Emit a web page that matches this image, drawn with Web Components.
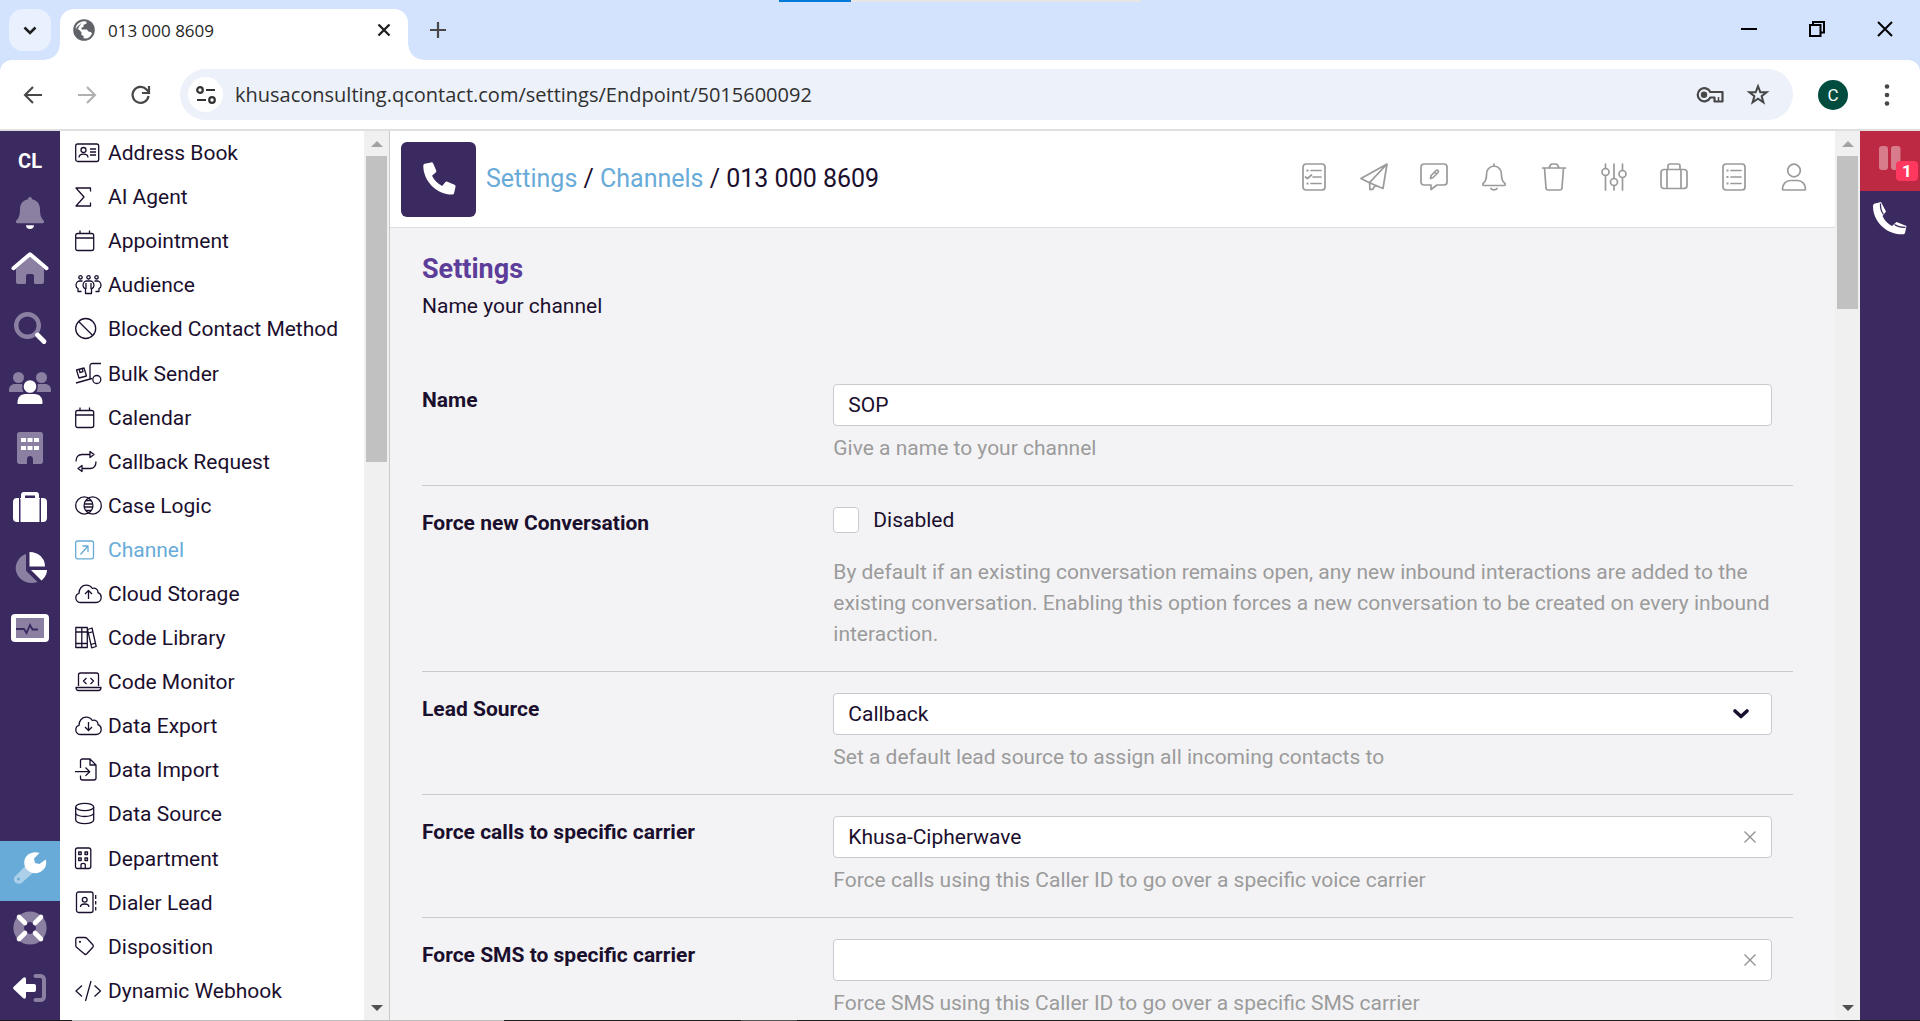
<!DOCTYPE html>
<html lang="en">
<head>
<meta charset="utf-8">
<title>013 000 8609</title>
<style>
  html, body { margin: 0; height: 100%; }
  body {
    --plum: #3b2a60;
    --ink: #1b0f2e;
    --sky: #68abd8;
    --muted: #9b9b9b;
    --line: #c9cacf;
    font-family: Roboto, "Liberation Sans", sans-serif;
    font-size: 21px;
    color: var(--ink);
    overflow: hidden;
  }
</style>
</head>
<body>
<browser-window>
  <settings-app></settings-app>
</browser-window>

<script>
/* ---------- icon set: [width, height, markup] ---------- */
const ICONS = {
  /* browser */
  chevron: [18, 18, '<path d="M3.5 6.5 9 12l5.500-5.500" fill="none" stroke="currentColor" stroke-width="2.600"/>'],
  globe: [22, 22, '<circle cx="11" cy="11" r="10.800" fill="#5f6368"/><path d="M9.500 2.600c1.800-.6 3-.4 4.200.1l-.4 2.100-2.600.9-.3 2.200-2 .9.200 1.700 5.300.1 1.500 1.900 2.300.4 1.300 1.400c-.6 2-2.300 4.200-5 5.100l-3.600-.1.300-2.300-2.200-1.100-.1-2.800L2.600 9.200c.6-3.200 3.300-5.900 6.900-6.600z" fill="#fff"/><path d="M9 3.500 6.500 7 5 10l3 2.500-2.500-.5L3 9z" fill="#5f6368"/>'],
  cross: [14, 14, '<path d="M1.500 1.500 12.500 12.500M12.500 1.500 1.500 12.500" stroke="currentColor" stroke-width="2.300" fill="none"/>'],
  plus: [18, 18, '<path d="M9 1v16M1 9h16" stroke="#474747" stroke-width="2.200"/>'],
  minimise: [16, 16, '<path d="M0 8h16" stroke="#000" stroke-width="2"/>'],
  restore: [16, 16, '<path d="M1 4h10.500v11H1zM4 4V1h11v10.500h-3" fill="none" stroke="#000" stroke-width="2"/>'],
  closewin: [16, 16, '<path d="M1 1l14 14M15 1 1 15" stroke="#000" stroke-width="2"/>'],
  back: [20, 20, '<path d="M10 2 2 10l8 8M2 10h17" fill="none" stroke="currentColor" stroke-width="2.100"/>'],
  forward: [20, 20, '<path d="M10 2l8 8-8 8M18 10H1" fill="none" stroke="currentColor" stroke-width="2.100"/>'],
  reload: [20, 20, '<path d="M17.500 11a8 8 0 1 1-2-6.500L18 7" fill="none" stroke="currentColor" stroke-width="2.200"/><path d="M18 1v7h-7" fill="none" stroke="currentColor" stroke-width="2.200"/>'],
  tune: [20, 18, '<g fill="none" stroke="#333" stroke-width="2.200"><circle cx="4" cy="4" r="2.800"/><path d="M10 4h9M1 14h9"/><circle cx="16" cy="14" r="2.800"/></g>'],
  key: [28, 16, '<path d="M14.300 5H26.500v9.500h-8V10.500H14.300a6.600 6.600 0 1 1 0-5.500z" fill="none" stroke="#474747" stroke-width="2.200" stroke-linejoin="round"/><circle cx="8" cy="7.800" r="3.200" fill="#474747"/><path d="M22.500 10v4" stroke="#474747" stroke-width="1.500"/>'],
  star: [24, 24, '<path d="M12 3.200l2.300 6h6.300l-5 3.900 1.800 6.300L12 15.700l-5.400 3.700 1.800-6.300-5-3.900h6.300z" fill="none" stroke="#474747" stroke-width="2"/>'],
  dots: [6, 22, '<g fill="#474747"><circle cx="3" cy="2.500" r="2.300"/><circle cx="3" cy="11" r="2.300"/><circle cx="3" cy="19.500" r="2.300"/></g>'],

  /* rails: solid shape plus translucent shape */
  bell: [30, 34, '<path d="M15 0c1.300 0 2 .9 2 2.200 5 1 8 4.600 8 10 0 6 1.300 9 3.500 11 1.200 1.300.5 3-1 3H2.500c-1.500 0-2.200-1.700-1-3C3.700 21.200 5 18.200 5 12.200c0-5.400 3-9 8-10C13 .9 13.700 0 15 0z" fill="#8b7fa2"/><path d="M11 28.200h8c0 2.600-1.700 3.800-4 3.800s-4-1.200-4-3.800z" fill="#fff"/>'],
  home: [38, 32, '<path d="M5 17 19 4.800 33 17v13a2 2 0 0 1-2 2h-6.500c-1 0-1.500-.6-1.500-1.500V24c0-1.200-.8-2-2-2h-4c-1.200 0-2 .8-2 2v6.500c0 .9-.5 1.500-1.500 1.500H7a2 2 0 0 1-2-2z" fill="#8b7fa2"/><path d="M2.500 16.200 19 2.200l16.500 14" fill="none" stroke="#fff" stroke-width="4" stroke-linecap="round" stroke-linejoin="round"/>'],
  search: [34, 32, '<circle cx="14.500" cy="13.500" r="11.300" fill="none" stroke="#8b7fa2" stroke-width="4.400"/><path d="M24.500 23 31 29.500" stroke="#fff" stroke-width="4.800" stroke-linecap="round"/>'],
  users: [42, 32, '<g fill="#8b7fa2"><circle cx="9.500" cy="5.500" r="5.500"/><circle cx="32.500" cy="5.500" r="5.500"/><path d="M0 18c0-3.500 2.500-6 6-6h6c1.500 0 2 .5 1.500 2-.4 2 0 4 1 6H1c-.6 0-1-.5-1-1zM42 18c0-3.500-2.500-6-6-6h-6c-1.500 0-2 .5-1.500 2 .4 2 0 4-1 6H41c.6 0 1-.5 1-1z"/></g><circle cx="21" cy="14.500" r="7.500" fill="#3b2a60"/><circle cx="21" cy="14.500" r="6.300" fill="#fff"/><path d="M8.500 32v-1.500c0-5 3-8.500 8-8.500h9c5 0 8 3.500 8 8.500V31c0 .6-.4 1-1 1z" fill="#fff"/>'],
  building: [26, 32, '<path d="M2.500 0h21c1.500 0 2.500 1 2.500 2.500v27c0 1.500-1 2.500-2.500 2.500H16v-5c0-4-6-4-6 0v5H2.500C1 32 0 31 0 29.500v-27C0 1 1 0 2.500 0z" fill="#8b7fa2"/><g fill="#fff"><path d="M4 6h5v4H4zM10.500 6h5v4h-5zM17 6h5v4h-5zM4 14h5v4H4zM10.500 14h5v4h-5zM17 14h5v4h-5z"/></g>'],
  suitcase: [34, 32, '<path d="M8 6V3c0-2 1-3 3-3h12c2 0 3 1 3 3v3h1v24H7V6zM12 3.500V6h10V3.500z" fill="#fff" fill-rule="evenodd"/><path d="M6 6v24H4c-2.500 0-4-1.500-4-4V10c0-2.500 1.500-4 4-4zM28 6h2c2.500 0 4 1.500 4 4v16c0 2.500-1.500 4-4 4h-2z" fill="#fff"/><path d="M7 7v23M27 7v23" stroke="#3b2a60"/>'],
  pie: [36, 32, '<path d="M14 2v15.500c0 1 .3 1.500 1 2.200L25.500 30A16 15 0 1 1 14 2z" fill="#8b7fa2"/><path d="M17.500 0C27 0 33 6.500 33 14.500H17.500z" fill="#fff"/><path d="M19 18h16c0 4-2.500 8-5.500 10.500z" fill="#fff"/>'],
  monitor: [38, 28, '<rect width="38" height="28" rx="4" fill="#fff"/><path d="M5 4h28v20H5z" fill="#8b7fa2"/><path d="M5 15h8l2.500 4L19 11l2.500 4.500H27" fill="none" stroke="#3b2a60" stroke-width="1.800"/>'],
  wrench: [34, 32, '<path d="M1.500 25 14 12.500l7.500 7L8.500 31c-4.500 2.500-9.500-2-7-6z" fill="#acd0ea"/><circle cx="5.500" cy="27" r="1.500" fill="#68abd8"/><path d="M32.700 7.500A11 10.500 0 1 1 26.500 1l-5.500 5.500 1 4.500 4.500 1z" fill="#fff"/>'],
  buoy: [34, 34, '<circle cx="17" cy="17" r="11.300" fill="none" stroke="#8b7fa2" stroke-width="10.600"/><path d="M6 6l6 6M28 6l-6 6M6 28l6-6M28 28l-6-6" stroke="#fff" stroke-width="4.600" stroke-linecap="round"/>'],
  logout: [34, 28, '<path d="M22.500 2h5c2 0 3.500 1.500 3.500 3.500v17c0 2-1.500 3.500-3.500 3.500h-5" fill="none" stroke="#8b7fa2" stroke-width="4" stroke-linecap="round"/><path d="M1 12.500 10 4c1.500-1.400 3-.5 3 1.200V10h8c1.200 0 2 .8 2 2v4c0 1.200-.8 2-2 2h-8v4.800c0 1.700-1.500 2.600-3 1.200L1 15.500c-1.200-1-1.200-2 0-3z" fill="#fff"/>'],
  pause: [22, 24, '<g fill="#d87c8c"><rect width="9" height="24" rx="3"/><rect x="12" width="9.500" height="24" rx="3"/></g>'],
  handset: [34, 34, '<path d="M2 1.500 8 0l5 9.500L9.500 14c2 4.500 5.500 8 9.500 10l4.500-4 10 4-1.500 7c-.3.800-1 1.300-2 1.300C14 33 0 20 0 4c0-1.200.7-2.200 2-2.500z" fill="#fff"/><path d="M7.500 1.500c-.3 4.500.8 8 3 11M21.500 22.500c3.500 2.500 7.500 3 11 2.800" stroke="#3b2a60" fill="none" stroke-width="1.200"/>'],
  phone: [34, 34, '<path d="M2.800 1.800 9 .4c1-.2 1.800.2 2.200 1.100l3 7c.3.800.1 1.600-.5 2.100L10 13.700c2.300 4.500 5.700 7.900 10.200 10.200l3-3.700c.6-.7 1.400-.9 2.200-.5l7 3c.9.400 1.300 1.200 1.100 2.200l-1.400 6.200c-.2 1-.9 1.500-1.900 1.500C14.500 32.600 1.300 19 1.300 3.700c0-1 .5-1.700 1.500-1.900z" fill="#fff"/>'],

  /* page header actions */
  tasks: [28, 28, '<g class="o"><rect x="3" y="1" width="22" height="26" rx="3"/><path d="M11 7.500h10M13 14h8M11 20.500h10M5.500 14l2 1.500 4-3.500"/></g><path d="M6.500 6.500h2v2h-2zM6.500 19.500h2v2h-2z" fill="currentColor"/>'],
  plane: [28, 28, '<path class="o" d="M27 1 1 15.500l8.500 4.200L23 25.500zM9.500 19.700 27 1M9.500 19.700l.5 7 3-.5 2-4"/>'],
  note: [28, 28, '<path class="o" d="M4 1h20c1.800 0 3 1.200 3 3v15c0 1.800-1.200 3-3 3h-7l-6 4.500V22H4c-1.800 0-3-1.200-3-3V4c0-1.800 1.200-3 3-3z"/><path class="o" d="M10.500 15.500l.6-3 5-5c1.500-1 3 .8 2 2l-5 5zM14.500 9l2 2"/>'],
  alert: [28, 28, '<path class="o" d="M14 1v2c5 .5 7.500 4 7.500 9 0 4.500 1 6.500 3.300 8.300.8.800.5 2.200-.8 2.200H4c-1.300 0-1.600-1.400-.8-2.200C5.500 18.500 6.500 16.500 6.500 12c0-5 2.500-8.500 7.500-9M11 25.500c1 1.700 5 1.700 6 0"/>'],
  trash: [28, 28, '<path class="o" d="M2.500 5h23M4.500 5l1.500 20c.1 1.300 1 2 2.200 2h11.600c1.200 0 2.100-.7 2.200-2l1.500-20M9 5l1.500-3c.4-.7.900-1 1.700-1h3.600c.8 0 1.300.3 1.700 1L19 5"/>'],
  sliders: [28, 28, '<g class="o"><path d="M5.500 1v4.500M5.500 12.500V27M14 1v14.500M14 22.500V27M22.500 1v6.500M22.500 14.500V27"/><circle cx="5.500" cy="9" r="3.500"/><circle cx="14" cy="19" r="3.500"/><circle cx="22.500" cy="11" r="3.500"/></g>'],
  bag: [28, 28, '<path class="o" d="M4 6.500h20c1.800 0 3 1.200 3 3v13c0 1.800-1.200 3-3 3H4c-1.800 0-3-1.200-3-3v-13c0-1.800 1.200-3 3-3zM7 6.500v19M21 6.500v19M8 6.500V3c0-1.200.8-2 2-2h8c1.200 0 2 .8 2 2v3.500"/>'],
  list: [28, 28, '<g class="o"><rect x="3" y="1" width="22" height="26" rx="3"/><path d="M11 7.500h10M11 14h10M11 20.500h10"/></g><path d="M6.500 6.500h2v2h-2zM6.500 13h2v2h-2zM6.500 19.500h2v2h-2z" fill="currentColor"/>'],
  user: [28, 28, '<g class="o"><circle cx="14" cy="7.500" r="6.300"/><path d="M3.500 27c-.7 0-1-.4-1-1 0-5 3.500-8.500 8-8.500h7c4.500 0 8 3.500 8 8.500 0 .6-.3 1-1 1z"/></g>'],

  /* settings menu */
  m_address: [28, 24, '<g class="t"><rect x=".7" y="3" width="23" height="17.500" rx="2"/><circle cx="8.500" cy="9" r="2.500"/><path d="M4 16.500c0-2 1.500-3.300 4.500-3.300s4.500 1.300 4.500 3.300M15 8h6M15 11h6M15 14h6"/></g>'],
  m_sigma: [28, 24, '<path class="t" d="M15.500 6.500V3H1l8 9-8 9h14.500v-3.500"/>'],
  m_calendar: [28, 24, '<path class="t" d="M2.700 4.500h14c1.300 0 2 .7 2 2v13c0 1.300-.7 2-2 2h-14c-1.300 0-2-.7-2-2v-13c0-1.300.7-2 2-2zM.7 9h18M5 1.500v3M14.500 1.500v3"/>'],
  m_audience: [28, 24, '<g class="t"><circle cx="5.500" cy="4.300" r="1.700"/><circle cx="13.500" cy="4.300" r="1.700"/><circle cx="21.500" cy="4.300" r="1.700"/><path d="M7.500 8H4.500c-2 0-3.500 2-3.500 4.500 0 1.500 1 2.500 2 3v3h3.500M19.500 8h3c2 0 3.500 2 3.500 4.500 0 1.500-1 2.500-2 3v3h-3.500M11.500 8h4c2 0 3.500 2 3.500 4.500 0 1.500-1 2.500-2.500 3.500v4.500h-6V16C9 15 8 14 8 12.500 8 10 9.500 8 11.500 8zM11 10v6M16 10v6"/></g>'],
  m_ban: [28, 24, '<g class="t"><circle cx="10.700" cy="11.500" r="10"/><path d="M3.700 4.500l14 14"/></g>'],
  m_bulk: [28, 24, '<g class="t"><path d="M1.500 8l7.500-2 2.500 8-7.500 2zM4.200 7.300l.8 3.200 3-.8-.8-3.200M1 21l16-4.500M26 1.500h-8.500c-1.700 0-2.500.8-2.500 2.500v13"/><circle cx="21.800" cy="17.500" r="4"/></g>'],
  m_callback: [28, 24, '<path class="t" d="M1 11.500C1 7 3 4.500 7 4.500h8M15 1.500v6l4-3zM21 11.500c0 4.500-2 7-6 7H7M7 15.500v6l-4-3z"/>'],
  m_venn: [28, 24, '<g class="t"><circle cx="9.300" cy="11.500" r="8.600"/><circle cx="17.700" cy="11.500" r="8.600"/><path d="M11 6.500h5M9.500 10h8M9.500 13h8M11 16.500h5"/></g>'],
  m_channel: [28, 24, '<g class="t"><rect x=".7" y="3" width="17.800" height="17.800" rx="2"/><path d="M5.500 16.500l7-8M7.500 8h5.500v6"/></g>'],
  m_cloudup: [28, 24, '<g class="t"><path d="M6 20.500c-3 0-5.200-2-5.200-4.800 0-2.200 1.200-3.800 3.200-4.400C4 6.500 7 3.200 11.300 3.200c2.700 0 4.700 1.200 6 3.300 3-1 6 .8 5.700 4.200 2 .7 3.200 2.300 3.200 4.500 0 3.200-2.200 5.300-5.200 5.300z"/><path d="M13.500 17V9M10 12l3.500-3.500L17 12"/></g>'],
  m_books: [28, 24, '<path class="t" d="M.8 1.500h6v20h-6zM6.800 1.500h5.500v20H6.800zM.8 6h11.500M.8 17.500h11.500M12.500 3.500l4.500-1.500 4.200 18.500-4.500 1.300zM13.500 7l4.500-1.300M16 18.500l4.500-1.300"/>'],
  m_code: [28, 24, '<path class="t" d="M3.500 16V5c0-1.200.6-2 2-2h16c1.400 0 2 .8 2 2v11M1 17.500h25c0 2-1 3-2.500 3h-20c-1.500 0-2.500-1-2.500-3zM11.500 8l-3 3 3 3M15.500 8l3 3-3 3"/>'],
  m_clouddown: [28, 24, '<g class="t"><path d="M6 20.500c-3 0-5.200-2-5.200-4.800 0-2.200 1.200-3.800 3.200-4.400C4 6.500 7 3.200 11.300 3.200c2.700 0 4.700 1.200 6 3.300 3-1 6 .8 5.700 4.200 2 .7 3.200 2.300 3.200 4.500 0 3.200-2.200 5.300-5.200 5.300z"/><path d="M13.500 8v8M10 13l3.500 3.500L17 13"/></g>'],
  m_import: [28, 24, '<path class="t" d="M5.500 10V3c0-1.200.8-2 2-2h7.500l6 6v13c0 1.200-.8 2-2 2H7.500c-1.200 0-2-.8-2-2v-2.500M15 1v6h6M0 13.700h14.500M10.500 9.500l4.200 4.200-4.200 4.200"/>'],
  m_database: [28, 24, '<g class="t"><ellipse cx="9.700" cy="5" rx="9" ry="3.700"/><path d="M.7 5v13c0 2 4 3.700 9 3.700s9-1.700 9-3.700V5M.7 11c0 2 4 3.500 9 3.500s9-1.500 9-3.500"/></g>'],
  m_department: [28, 24, '<path class="t" d="M2.500 1h11.300c1.200 0 2 .8 2 2v16.500c0 1.200-.8 2-2 2H2.500c-1.200 0-2-.8-2-2V3c0-1.200.8-2 2-2zM3.700 5h2.500v2.500H3.700zM10 5h2.500v2.500H10zM3.700 11h2.500v2.500H3.700zM10 11h2.500v2.500H10zM6 21.500v-3.500c0-2.300 4.300-2.300 4.300 0v3.500"/>'],
  m_dialer: [28, 24, '<g class="t"><rect x="1.500" y="1" width="16.500" height="20.500" rx="2"/><circle cx="9.700" cy="8.700" r="2.400"/><path d="M5.500 16c0-2 1.500-3 4.200-3s4.200 1 4.200 3M20.700 4v4M20.700 10v3.500M20.700 16v3.500"/></g>'],
  m_tag: [28, 24, '<path class="t" d="M2.500 2.500h7.500c.8 0 1.300.2 1.800.7l6 6.500c.8.900.8 1.700 0 2.600l-6 6.500c-.9.900-1.800.9-2.600 0L1.500 12.300c-.5-.5-.7-1-.7-1.800V4.200c0-1.100.7-1.700 1.700-1.700z"/><circle cx="5" cy="6.800" r="1.100" fill="currentColor"/>'],
  m_webhook: [28, 24, '<path class="t" d="M7 6.500 1 12l6 5.500M19.500 6.500l6 5.500-6 5.500M16 2l-5.500 20"/>'],

  /* form */
  caret: [18, 12, '<path d="M3 3l6 5.500L15 3" fill="none" stroke="currentColor" stroke-width="3.600" stroke-linecap="round" stroke-linejoin="round"/>'],
  clear: [12, 12, '<path d="M.5.5l11 11M11.500.5l-11 11" stroke="#909090" stroke-width="1.300"/>'],
  up: [12, 6, '<path d="M6 0l6 6H0z" fill="#a3a3a3"/>'],
  down: [12, 6, '<path d="M0 0h12L6 6z" fill="#505050"/>'],
};

/* every component shares this: styles + markup into an open root */
class Base extends HTMLElement {
  connectedCallback() {
    if (this.shadowRoot) return;
    const t = document.createElement('template');
    t.innerHTML = `<style>
      *, *::before, *::after { box-sizing: border-box; }
      button { border: 0; padding: 0; background: none; font: inherit; color: inherit;
               display: flex; align-items: center; justify-content: center; }
      a { color: inherit; text-decoration: none; }
      ${this.css()}</style>${this.html()}`;
    this.attachShadow({ mode: 'open' }).append(t.content.cloneNode(true));
  }
}

customElements.define('ui-icon', class extends Base {
  css() { return `:host { display: inline-flex; flex: none; }
    svg { display: block; overflow: visible; }
    .o { fill: none; stroke: currentColor; stroke-width: 1.700; stroke-linejoin: round; stroke-linecap: round; }
    .t { fill: none; stroke: currentColor; stroke-width: 1.300; stroke-linejoin: round; }`; }
  html() {
    const [w, h, body] = ICONS[this.getAttribute('name')];
    return `<svg width="${w}" height="${h}" viewBox="0 0 ${w} ${h}" aria-hidden="true">${body}</svg>`;
  }
});

customElements.define('scroll-track', class extends Base {
  css() { return `:host { display: flex; flex-direction: column; align-items: center; width: 25px; flex: none;
      background: #f0f0f0; }
    .end { height: 25px; display: flex; align-items: center; justify-content: center; flex: none; }
    .thumb { width: 21px; background: #c1c1c1; flex: ${this.getAttribute('share')} 1 0; }
    .rest { flex: ${100 - this.getAttribute('share')} 1 0; }`; }
  html() { return `<span class="end"><ui-icon name="up"></ui-icon></span><span class="thumb"></span>
    <span class="rest"></span><span class="end"><ui-icon name="down"></ui-icon></span>`; }
});

customElements.define('tab-strip', class extends Base {
  css() { return `:host { display: flex; height: 60px; flex: none; padding: 9px 0 0 9px; background: #d3e2fd;
      position: relative; color: #1f1f1f; font: 17px/24px "Open Sans", "Noto Sans", sans-serif; }
    .load { position: absolute; top: 0; left: 779px; width: 362px; height: 2px;
      background: linear-gradient(90deg, #0078d7 20%, #e6e6e6 20%); }
    .find { width: 42px; height: 42px; border-radius: 14px; background: #e9f1ff; margin-right: 9px; }
    .tab { position: relative; width: 348px; background: #fff; border-radius: 14px 14px 0 0;
      display: flex; align-items: center; padding: 0 17px 9px 13px; gap: 13px; }
    .tab::before, .tab::after { content: ""; position: absolute; bottom: 0; width: 15px; height: 15px; }
    .tab::before { left: -15px; background: radial-gradient(circle at 0 0, transparent 14px, #fff 15px); }
    .tab::after { right: -15px; background: radial-gradient(circle at 100% 0, transparent 14px, #fff 15px); }
    .tab span { flex: 1; padding-top: 2px; }
    .new { width: 60px; height: 42px; }
    .win { margin-left: auto; display: flex; height: 40px; padding-right: 1px; }
    .win button { width: 68px; }`; }
  html() { return `<div class="load"></div>
    <button class="find" aria-label="Search tabs"><ui-icon name="chevron"></ui-icon></button>
    <div class="tab"><ui-icon name="globe"></ui-icon><span>013 000 8609</span>
      <button aria-label="Close tab"><ui-icon name="cross"></ui-icon></button></div>
    <button class="new" aria-label="New tab"><ui-icon name="plus"></ui-icon></button>
    <div class="win"><button aria-label="Minimise"><ui-icon name="minimise"></ui-icon></button>
      <button aria-label="Restore"><ui-icon name="restore"></ui-icon></button>
      <button aria-label="Close"><ui-icon name="closewin"></ui-icon></button></div>`; }
});

customElements.define('tool-bar', class extends Base {
  css() { return `:host { display: block; flex: none; background: #d3e2fd; }
    .bar { display: flex; align-items: center; height: 71px; padding: 0 6px; background: #fff;
      border-radius: 12px 12px 0 0; border-bottom: 2px solid #dfdfdf; color: #474747; }
    .b { width: 54px; height: 51px; }
    .off { color: #b0b0b0; }
    .omni { flex: 1; display: flex; align-items: center; height: 51px; margin: 0 13px 0 12px; padding: 0 11px 0 8px;
      border-radius: 26px; background: #ecf1fa; }
    .chip { width: 35px; height: 35px; border-radius: 50%; background: #fff; }
    input { flex: 1; min-width: 0; border: 0; outline: 0; background: none; padding: 0 0 0 12px; color: #303030;
      font: 20px/28px "Open Sans", "Noto Sans", sans-serif; }
    .k { width: 48px; height: 48px; }
    .av { width: 30px; height: 30px; border-radius: 50%; background: #004d40; color: #fff;
      font: 17px/30px Roboto, sans-serif; }`; }
  html() { return `<div class="bar">
    <button class="b" aria-label="Back"><ui-icon name="back"></ui-icon></button>
    <button class="b off" aria-label="Forward"><ui-icon name="forward"></ui-icon></button>
    <button class="b" aria-label="Reload"><ui-icon name="reload"></ui-icon></button>
    <div class="omni"><button class="chip" aria-label="Site information"><ui-icon name="tune"></ui-icon></button>
      <input type="text" aria-label="Address" value="khusaconsulting.qcontact.com/settings/Endpoint/5015600092">
      <button class="k" aria-label="Passwords"><ui-icon name="key"></ui-icon></button>
      <button class="k" aria-label="Bookmark"><ui-icon name="star"></ui-icon></button></div>
    <button class="b" aria-label="Profile"><span class="av">C</span></button>
    <button class="b" aria-label="Menu"><ui-icon name="dots"></ui-icon></button></div>`; }
});

customElements.define('browser-window', class extends Base {
  css() { return `:host { display: flex; flex-direction: column; height: 100vh; }
    ::slotted(*) { flex: 1; min-height: 0; }
    .edge { flex: none; height: 1px; background: linear-gradient(90deg, #1c1c1c 72px, #bdbdbd 72px 504px,
      #1c1c1c 504px 741px, #555 741px 797px, #1c1c1c 797px); }`; }
  html() { return `<tab-strip></tab-strip><tool-bar></tool-bar><slot></slot><div class="edge"></div>`; }
});

customElements.define('nav-rail', class extends Base {
  css() { return `:host { display: flex; flex-direction: column; width: 60px; flex: none; background: var(--plum); }
    button { height: 60px; width: 60px; flex: none; }
    .me { height: 58px; padding-top: 2px; color: #fff; font: bold 20px/24px Roboto, sans-serif; }
    .bell { height: 49px; }
    .low { padding-bottom: 6px; }
    .on { background: var(--sky); margin-top: auto; }
    .last { height: 59px; }`; }
  html() {
    const b = (n, l, c = '') => `<button class="${c}" aria-label="${l}"><ui-icon name="${n}"></ui-icon></button>`;
    return `<button class="me">CL</button>` + b('bell', 'Notifications', 'bell') + b('home', 'Home') +
      b('search', 'Search') + b('users', 'Contacts') + b('building', 'Companies') + b('suitcase', 'Cases') +
      b('pie', 'Reports') + b('monitor', 'Monitor') + b('wrench', 'Settings', 'low on') + b('buoy', 'Help', 'low') +
      b('logout', 'Log out', 'low last');
  }
});

customElements.define('menu-item', class extends Base {
  css() { return `:host { display: flex; flex: 1 0 44px; }
    a { flex: 1; display: flex; align-items: center; gap: 5px; padding-left: 15px; white-space: nowrap; }
    :host([current]) a { color: var(--sky); }`; }
  html() { return `<a href="#"><ui-icon name="m_${this.getAttribute('icon')}"></ui-icon><slot></slot></a>`; }
});

customElements.define('settings-menu', class extends Base {
  css() { return `:host { display: flex; width: 330px; flex: none; background: #fff; border-right: 1px solid #cacaca; }
    nav { flex: 1; min-width: 0; overflow: hidden; display: flex; flex-direction: column; padding-bottom: 7px; }`; }
  html() {
    const items = [['address', 'Address Book'], ['sigma', 'AI Agent'], ['calendar', 'Appointment'],
      ['audience', 'Audience'], ['ban', 'Blocked Contact Method'], ['bulk', 'Bulk Sender'], ['calendar', 'Calendar'],
      ['callback', 'Callback Request'], ['venn', 'Case Logic'], ['channel', 'Channel'], ['cloudup', 'Cloud Storage'],
      ['books', 'Code Library'], ['code', 'Code Monitor'], ['clouddown', 'Data Export'], ['import', 'Data Import'],
      ['database', 'Data Source'], ['department', 'Department'], ['dialer', 'Dialer Lead'], ['tag', 'Disposition'],
      ['webhook', 'Dynamic Webhook']];
    return `<nav>${items.map(([i, t]) =>
      `<menu-item icon="${i}"${t === 'Channel' ? ' current' : ''}>${t}</menu-item>`).join('')}</nav>
      <scroll-track share="36.5"></scroll-track>`;
  }
});

customElements.define('page-header', class extends Base {
  css() { return `:host { display: flex; align-items: center; height: 97px; flex: none; padding: 0 11px; background: #fff;
      border-bottom: 1px solid #dcdde1; }
    .tile { width: 75px; height: 75px; border-radius: 6px; background: var(--plum); display: flex;
      align-items: center; justify-content: center; margin-right: 10px; }
    .crumbs { flex: 1; font-size: 25px; line-height: 32px; }
    .crumbs a { color: var(--sky); }
    .acts { display: flex; color: #9a9a9a; }
    .acts button { width: 60px; height: 60px; padding-bottom: 4px; }`; }
  html() {
    const acts = ['tasks', 'plane', 'note', 'alert', 'trash', 'sliders', 'bag', 'list', 'user'];
    return `<span class="tile"><ui-icon name="phone"></ui-icon></span>
      <div class="crumbs"><a href="#">Settings</a> / <a href="#">Channels</a> / 013 000 8609</div>
      <div class="acts">${acts.map(a => `<button aria-label="${a}"><ui-icon name="${a}"></ui-icon></button>`).join('')}</div>`;
  }
});

/* label on the left, control and help text on the right; help comes in through the slot */
customElements.define('setting-row', class extends Base {
  css() { return `:host { display: grid; grid-template-columns: 30% 1fr; padding: 21px 0;
      border-bottom: 1px solid var(--line); line-height: 31px; }
    :host(:last-of-type) { border-bottom: 0; }
    .name { font-weight: bold; padding-top: 1px; }
    .field { padding-right: 21px; }
    .box { display: flex; align-items: center; height: 42px; background: #fff; border: 1px solid var(--line);
      border-radius: 4px; position: relative; }
    input[type=text], select { flex: 1; min-width: 0; height: 40px; border: 0; outline: 0; background: none;
      padding: 0 14px; font: inherit; color: inherit; appearance: none; }
    .box > ui-icon { position: absolute; right: 21px; pointer-events: none; }
    .box button { width: 42px; height: 40px; }
    .help { color: var(--muted); margin-top: 7px; }
    .tick { display: flex; align-items: center; gap: 14px; height: 26px; }
    .tick + .help { margin-top: 24px; }
    input[type=checkbox] { appearance: none; width: 26px; height: 26px; margin: 0; background: #fff;
      border: 1px solid var(--line); border-radius: 4px; }`; }
  html() {
    const kind = this.getAttribute('kind'), v = this.getAttribute('value') || '';
    const control = {
      text: `<div class="box"><input type="text" id="c" value="${v}"></div>`,
      select: `<div class="box"><select id="c"><option>${v}</option></select><ui-icon name="caret"></ui-icon></div>`,
      lookup: `<div class="box"><input type="text" id="c" value="${v}"><button aria-label="Clear"><ui-icon name="clear"></ui-icon></button></div>`,
      check: `<div class="tick"><input type="checkbox" id="c"><label for="c">${v}</label></div>`,
    }[kind];
    return `<label class="name" for="c">${this.getAttribute('label')}</label>
      <div class="field">${control}<div class="help"><slot></slot></div></div>`;
  }
});

customElements.define('channel-form', class extends Base {
  css() { return `:host { display: block; flex: 1; min-height: 0; overflow: hidden; background: #f3f3f5;
      padding: 23px 42px 0 32px; }
    header { height: 112px; }
    h1 { margin: 0; font-size: 27px; line-height: 36px; color: #5c3d99; }
    p { margin: 4px 0 0; line-height: 31px; }`; }
  html() { return `<header><h1>Settings</h1><p>Name your channel</p></header>
    <setting-row label="Name" kind="text" value="SOP">Give a name to your channel</setting-row>
    <setting-row label="Force new Conversation" kind="check" value="Disabled">By default if an existing conversation remains open, any new inbound interactions are added to the existing conversation. Enabling this option forces a new conversation to be created on every inbound interaction.</setting-row>
    <setting-row label="Lead Source" kind="select" value="Callback">Set a default lead source to assign all incoming contacts to</setting-row>
    <setting-row label="Force calls to specific carrier" kind="lookup" value="Khusa-Cipherwave">Force calls using this Caller ID to go over a specific voice carrier</setting-row>
    <setting-row label="Force SMS to specific carrier" kind="lookup">Force SMS using this Caller ID to go over a specific SMS carrier</setting-row>`; }
});

customElements.define('call-rail', class extends Base {
  css() { return `:host { display: flex; flex-direction: column; width: 60px; flex: none; background: var(--plum); }
    button { position: relative; width: 60px; height: 60px; }
    .pause { background: #bd2842; padding-bottom: 6px; }
    .n { position: absolute; right: 2px; bottom: 10px; width: 22px; height: 20px; border-radius: 4px;
      background: #ff3860; color: #fff; font: bold 17px/20px Roboto, sans-serif; }
    .call { height: 56px; }`; }
  html() { return `<button class="pause" aria-label="Paused"><ui-icon name="pause"></ui-icon><span class="n">1</span></button>
    <button class="call" aria-label="Call"><ui-icon name="handset"></ui-icon></button>`; }
});

customElements.define('settings-app', class extends Base {
  css() { return `:host { display: flex; background: #f3f3f5; }
    main { flex: 1; min-width: 0; display: flex; flex-direction: column; }`; }
  html() { return `<nav-rail></nav-rail><settings-menu></settings-menu>
    <main><page-header></page-header><channel-form></channel-form></main>
    <scroll-track share="18.2"></scroll-track><call-rail></call-rail>`; }
});
</script>
</body>
</html>
